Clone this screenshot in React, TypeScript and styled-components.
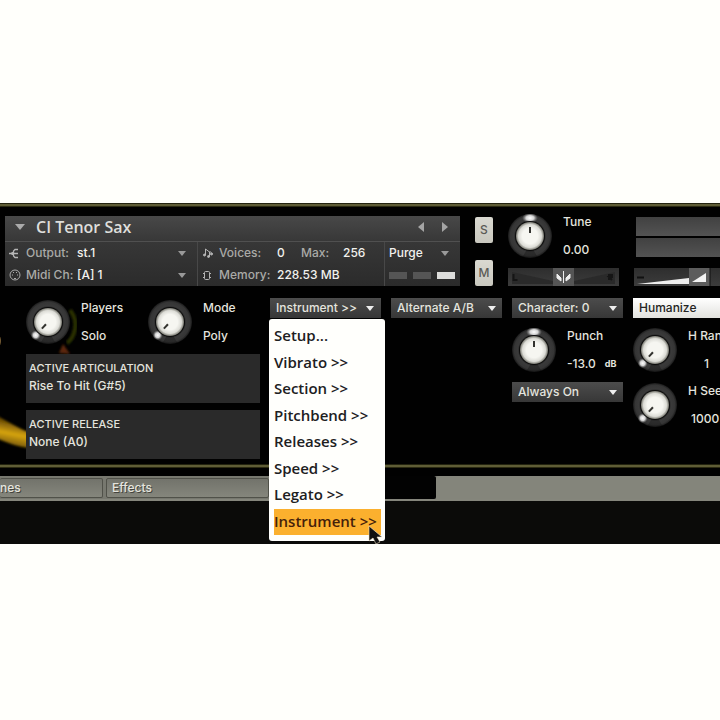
import React from "react";
import styled, { createGlobalStyle, css } from "styled-components";

const GlobalStyle = createGlobalStyle`
  *, *::before, *::after { box-sizing: border-box; }
  body {
    margin: 0;
    background: #fffffb;
    font: 500 12px/16px Inter, "Liberation Sans", sans-serif;
    color: #e4e4de;
    overflow-x: hidden;
  }
  button, input, select { font: inherit; color: inherit; }
  button { border: 0; padding: 0; cursor: default; }
`;

const Page = styled.main`
  padding-top: 203px;
  min-height: 100vh;
  overflow: hidden;
`;

const Rack = styled.section`
  background: #010101;
  overflow: hidden;
`;

const GoldLine = styled.div`
  height: 4px;
  background: #5f5d36;
  border-top: 1px solid #23230f;
  border-bottom: 1px solid #2b2a12;
`;

const TopRow = styled.div`
  display: grid;
  grid-template-columns: minmax(0, 455fr) 18px 111px minmax(0, 86fr);
  gap: 15px;
  padding: 7px 0 0 5px;
  height: 91px;
`;

/* ---------- instrument header ---------- */

const Header = styled.div`
  height: 70px;
  margin-top: 2px;
  background: linear-gradient(#484848, #373737 26px, #2b2b2b);
`;

const TitleRow = styled.div`
  display: flex;
  align-items: flex-start;
  height: 26px;
  padding: 0 9px 0 9px;
  border-bottom: 1px solid #505050;
`;

const Title = styled.h1`
  flex: 1;
  margin: 0 0 0 10px;
  font: 600 16px/22px "Open Sans", "Noto Sans", sans-serif;
  color: #dededb;
  white-space: nowrap;
`;

const IconButton = styled.button`
  display: grid;
  place-items: center;
  height: 22px;
  width: 12px;
  background: none;
  & + & { margin-left: 12px; }
`;

const HeaderGrid = styled.div`
  display: grid;
  grid-template-columns: minmax(0, 192fr) minmax(0, 187fr) minmax(0, 76fr);
`;

const HeaderColumn = styled.div`
  & + & { border-left: 1px solid #484848; }
`;

const Field = styled.div<{ $plain?: boolean }>`
  display: flex;
  align-items: center;
  height: 22px;
  padding-left: 4px;
  white-space: nowrap;
  color: #aaaaa7;
  & + & { border-top: ${(p) => (p.$plain ? "0" : "1px solid #454545")}; }
`;

const FieldIcon = styled.span`
  flex: none;
  width: 17px;
  display: flex;
`;

const FieldLabel = styled.label<{ $w: number }>`
  flex: none;
  width: ${(p) => p.$w}px;
`;

const Value = styled.output<{ $w?: number }>`
  flex: none;
  width: ${(p) => (p.$w ? `${p.$w}px` : "auto")};
  color: #f1f1ed;
`;

const FieldSelect = styled.select`
  flex: 1;
  min-width: 0;
  margin-right: 11px;
  padding: 0 14px 0 0;
  border: 0;
  appearance: none;
  color: #f1f1ed;
  background: url("data:image/svg+xml,%3Csvg xmlns='http://www.w3.org/2000/svg' width='8' height='5'%3E%3Cpath d='M0 0h8L4 5z' fill='%23999'/%3E%3C/svg%3E") right center no-repeat;
`;

const Meter = styled.i<{ $on?: boolean }>`
  flex: none;
  width: 18px;
  height: 7px;
  margin: 0 6px 0 0;
  background: ${(p) => (p.$on ? "#dddddb" : "#555")};
`;

/* ---------- solo / mute ---------- */

const ToggleStack = styled.div`
  display: flex;
  flex-direction: column;
  gap: 17px;
  padding-top: 3px;
`;

const Toggle = styled.button`
  height: 26px;
  border-radius: 2px;
  background: linear-gradient(#dad9d1, #c8c7be);
  color: #5b5a55;
`;

/* ---------- knobs and sliders ---------- */

const KnobField = styled.label`
  display: flex;
  gap: 11px;
  height: 44px;
  white-space: nowrap;
`;

const KnobFace = styled.span`
  position: relative;
  flex: none;
  width: 44px;
  height: 44px;
  svg { display: block; }
`;

const HiddenRange = styled.input`
  position: absolute;
  inset: 0;
  width: 100%;
  height: 100%;
  margin: 0;
  opacity: 0;
`;

const KnobText = styled.span`
  display: flex;
  flex-direction: column;
  justify-content: space-between;
  height: 44px;
`;

const KnobValue = styled.span<{ $indent?: number }>`
  display: flex;
  align-items: center;
  gap: 9px;
  padding-left: ${(p) => p.$indent ?? 0}px;
`;

const Unit = styled.small`
  font-size: 9px;
  font-weight: 700;
`;

function Knob({ label, value, unit, angle, indent }: {
  label: string; value: string; unit?: string; angle: number; indent?: number;
}) {
  const id = React.useId();
  return (
    <KnobField>
      <KnobFace>
        <svg width="44" height="44" viewBox="0 0 44 44" aria-hidden="true">
          <defs>
            <radialGradient id={`${id}r`}>
              <stop offset=".6" stopColor="#1a1a1a" />
              <stop offset=".74" stopColor="#3a3a3a" />
              <stop offset=".9" stopColor="#353535" />
              <stop offset="1" stopColor="#1a1a1a" />
            </radialGradient>
            <radialGradient id={`${id}c`}>
              <stop offset=".55" stopColor="#f6f6f1" />
              <stop offset=".82" stopColor="#dcdcd6" />
              <stop offset="1" stopColor="#77776f" />
            </radialGradient>
            <radialGradient id={`${id}g`}>
              <stop offset="0" stopColor="#fff" />
              <stop offset=".5" stopColor="#eee" stopOpacity=".85" />
              <stop offset="1" stopColor="#888" stopOpacity="0" />
            </radialGradient>
          </defs>
          <circle cx="22" cy="22" r="22" fill={`url(#${id}r)`} />
          <path d="M14 44l8-14 8 14z" fill="#020202" opacity=".25" />
          <g transform={`rotate(${angle} 22 22)`}>
            <ellipse cx="22" cy="4" rx={angle === 0 ? 8 : 5} ry="5" fill={`url(#${id}g)`} />
          </g>
          <circle cx="22" cy="22" r="15" fill="#0d0d0d" />
          <circle cx="22" cy="22" r="14" fill={`url(#${id}c)`} />
          <path d="M22 13v6" stroke="#33332f" strokeWidth="2" transform={`rotate(${angle} 22 22)`} />
        </svg>
        <HiddenRange type="range" defaultValue={angle === 0 ? 50 : 0} aria-label={label} />
      </KnobFace>
      <KnobText>
        <span>{label}</span>
        <KnobValue $indent={indent}>{value}{unit && <Unit>{unit}</Unit>}</KnobValue>
      </KnobText>
    </KnobField>
  );
}

const Channel = styled.div`
  display: flex;
  flex-direction: column;
  justify-content: space-between;
  height: 72px;
  min-width: 0;
`;

const Track = styled.span`
  position: relative;
  display: block;
  height: 18px;
  overflow: hidden;
  background: linear-gradient(#2e2e2e, #3c3c3c);
  svg { display: block; }
`;

const Screens = styled.div`
  display: grid;
  gap: 2px;
  padding: 3px 0 0 2px;
`;

const Screen = styled.div`
  height: 19px;
  background: linear-gradient(#414141, #535353);
`;

/* ---------- performance controls ---------- */

const Controls = styled.div`
  position: relative;
  display: grid;
  grid-template-columns: 234fr 111fr 111fr 111fr 87fr;
  gap: 10px;
  height: 166px;
  padding-left: 26px;
`;

const Backdrop = styled.svg`
  position: absolute;
  left: 0;
  top: 0;
`;

const Column = styled.div`
  position: relative;
  min-width: 0;
  display: flex;
  flex-direction: column;
  gap: 10px;
`;

const KnobRow = styled.div`
  display: grid;
  grid-template-columns: 122px 1fr;
  padding-top: 2px;
`;

const InfoStack = styled.div`
  display: grid;
  gap: 7px;
`;

const Info = styled.div`
  height: 49px;
  padding: 5px 3px;
  line-height: 18px;
  background: #2a2a2a;
  p { margin: 0; }
  p:first-child { font-size: 11px; }
`;

const bar = css`
  display: flex;
  align-items: center;
  width: 100%;
  height: 20px;
  padding: 0 7px 0 6px;
  border: 0;
  border-radius: 0;
  text-align: left;
  white-space: nowrap;
`;

const MenuButton = styled.button`
  ${bar}
  justify-content: space-between;
  background: linear-gradient(#4c4c4c, #373737);
`;

const BarSelect = styled.select`
  ${bar}
  flex: none;
  appearance: none;
  background:
    url("data:image/svg+xml,%3Csvg xmlns='http://www.w3.org/2000/svg' width='8' height='5'%3E%3Cpath d='M0 0h8L4 5z' fill='%23eee'/%3E%3C/svg%3E") right 6px center no-repeat,
    linear-gradient(#4c4c4c, #373737);
`;

const ModeButton = styled.button`
  ${bar}
  flex: none;
  color: #242422;
  background: linear-gradient(#fff, #e2e2de);
`;

const Menu = styled.ul`
  position: absolute;
  z-index: 2;
  top: 21px;
  left: -1px;
  display: grid;
  grid-auto-rows: 1fr;
  width: 116px;
  height: 222px;
  margin: 0;
  padding: 4px 4px 6px 5px;
  list-style: none;
  border-radius: 3px;
  background: #fffffc;
`;

const MenuItem = styled.button<{ $active?: boolean }>`
  width: 100%;
  height: 100%;
  padding-bottom: 2px;
  text-align: left;
  white-space: nowrap;
  font: 600 15px/24px "Open Sans", "Noto Sans", sans-serif;
  color: ${(p) => (p.$active ? "#45210a" : "#20201e")};
  background: ${(p) => (p.$active ? "#fbb02e" : "none")};
`;

const Pointer = styled.svg`
  position: absolute;
  z-index: 3;
  top: 228px;
  left: 98px;
`;

const Stack = styled.div`
  display: grid;
  gap: 11px;
`;

/* ---------- tab strip ---------- */

const Tabs = styled.nav`
  display: grid;
  grid-template-columns: 103fr 166fr 167fr 284fr;
  height: 25px;
  margin-top: 8px;
  border-bottom: 2px solid #85867c;
  background: #77786f;
`;

const Tab = styled.button<{ $current?: boolean }>`
  margin: ${(p) => (p.$current ? "0" : "2px 0 1px 3px")};
  padding: 0 5px;
  text-align: left;
  text-shadow: 1px 1px #44443e;
  border-radius: 2px;
  border: ${(p) => (p.$current ? "0" : "1px solid #505149")};
  background: ${(p) => (p.$current ? "#020202" : "linear-gradient(#72736b, #85867c)")};
  &:first-child { margin-left: 0; padding-left: 0; border-left: 0; }
`;

const TabFill = styled.div`
  border-top-left-radius: 3px;
  background: #84857b;
`;

const Floor = styled.div`
  height: 43px;
  background: #0b0b09;
`;

const menuItems = ["Setup...", "Vibrato >>", "Section >>", "Pitchbend >>", "Releases >>", "Speed >>", "Legato >>", "Instrument >>"];

const Down = () => (
  <svg width="8" height="5" aria-hidden="true"><path d="M0 0h8L4 5z" fill="#eee" /></svg>
);

export default function App() {
  return (
    <Page>
      <GlobalStyle />
      <Rack>
        <GoldLine />
        <TopRow>
          <Header>
            <TitleRow>
              <IconButton aria-label="Collapse">
                <svg width="10" height="6"><path d="M0 0h10L5 6z" fill="#aaa" /></svg>
              </IconButton>
              <Title>CI Tenor Sax</Title>
              <IconButton aria-label="Previous instrument">
                <svg width="6" height="10"><path d="M6 0v10L0 5z" fill="#a4a4a4" /></svg>
              </IconButton>
              <IconButton aria-label="Next instrument">
                <svg width="6" height="10"><path d="M0 0v10l6-5z" fill="#a4a4a4" /></svg>
              </IconButton>
            </TitleRow>
            <HeaderGrid>
              <HeaderColumn>
                <Field>
                  <FieldIcon>
                    <svg width="11" height="11" fill="none" stroke="#b5b5b5"><path d="M0 5.5h9M9 1.5H6L4.5 3v5L6 9.5h3" strokeWidth="1.3" /><path d="M3.5 4v3" strokeWidth="2" /></svg>
                  </FieldIcon>
                  <FieldLabel $w={51} htmlFor="output">Output:</FieldLabel>
                  <FieldSelect id="output"><option>st.1</option></FieldSelect>
                </Field>
                <Field>
                  <FieldIcon>
                    <svg width="12" height="12" fill="none" stroke="#aaa"><circle cx="6" cy="6" r="5" /><path d="M3 6h1M8 6h1M4 3.5h1M7 3.5h1M5 9.5h2" /></svg>
                  </FieldIcon>
                  <FieldLabel $w={51} htmlFor="midi">Midi Ch:</FieldLabel>
                  <FieldSelect id="midi"><option>[A] 1</option></FieldSelect>
                </Field>
              </HeaderColumn>
              <HeaderColumn>
                <Field>
                  <FieldIcon>
                    <svg width="12" height="11" fill="#b5b5b5" stroke="#b5b5b5"><path d="M3.5 7V1l4 3v5M7.5 3l3 3" fill="none" /><circle cx="2.5" cy="7" r="1" /><circle cx="6.5" cy="8.5" r="1" /><circle cx="9.5" cy="6" r="1" /></svg>
                  </FieldIcon>
                  <FieldLabel as="span" $w={58}>Voices:</FieldLabel>
                  <Value $w={24}>0</Value>
                  <FieldLabel as="span" $w={42}>Max:</FieldLabel>
                  <Value>256</Value>
                </Field>
                <Field>
                  <FieldIcon>
                    <svg width="10" height="11" fill="none" stroke="#b5b5b5"><rect x="2.5" y="1.5" width="5" height="8" rx="1" /><path d="M1 3.5h1M1 7.5h1M8 3.5h1M8 7.5h1" /></svg>
                  </FieldIcon>
                  <FieldLabel as="span" $w={58}>Memory:</FieldLabel>
                  <Value>228.53 MB</Value>
                </Field>
              </HeaderColumn>
              <HeaderColumn>
                <Field>
                  <FieldSelect aria-label="Purge"><option>Purge</option></FieldSelect>
                </Field>
                <Field $plain>
                  <Meter /><Meter /><Meter $on />
                </Field>
              </HeaderColumn>
            </HeaderGrid>
          </Header>

          <ToggleStack>
            <Toggle aria-label="Solo">S</Toggle>
            <Toggle aria-label="Mute">M</Toggle>
          </ToggleStack>

          <Channel>
            <Knob label="Tune" value="0.00" angle={0} />
            <Track>
              <svg width="111" height="18">
                <path d="M4 4l41 9v3H4zM107 4l-41 9v3h41z" fill="#2a2a2a" />
                <path d="M5.5 6v6h4M101 12V7h3v2h-3l3 3" fill="none" stroke="#151515" strokeWidth="2" />
                <rect x="45" width="21" height="18" fill="#555" />
                <path d="M55.5 3v12" stroke="#eee" />
                <path d="M49 6v4l4 3v-3zM62 6v4l-4 3v-3z" fill="#eee" stroke="#eee" />
              </svg>
              <HiddenRange type="range" aria-label="Pan" />
            </Track>
          </Channel>

          <Channel>
            <Screens><Screen /><Screen /></Screens>
            <Track>
              <svg width="86" height="18">
                <path d="M3 9.5h7" stroke="#111" strokeWidth="2" />
                <path d="M3 16l52-6v6z" fill="#eee" />
                <rect x="55" width="21" height="18" fill="#5c5c5c" />
                <path d="M58 14l14-9v9z" fill="#f2f2f2" />
                <path d="M76 0v18" stroke="#111" />
              </svg>
              <HiddenRange type="range" aria-label="Volume" />
            </Track>
          </Channel>
        </TopRow>

        <Controls>
          <Backdrop width="120" height="166" aria-hidden="true">
            <defs>
              <linearGradient id="arc" x1="0.2" y1="0" x2="0" y2="1">
                <stop offset="0" stopColor="#3a2402" />
                <stop offset=".5" stopColor="#d6a40c" />
                <stop offset="1" stopColor="#4a3503" />
              </linearGradient>
              <filter id="soft"><feGaussianBlur stdDeviation="1" /></filter>
            </defs>
            <path d="M-4 117C6 123 18 130 30 135v15C18 149 6 144-4 140z" fill="url(#arc)" filter="url(#soft)" />
            <path d="M70 12q7 9 5 19t-8 14" fill="none" stroke="#2c3004" strokeWidth="4" filter="url(#soft)" />
            <path d="M59 55l4-9 7 10z" fill="#5c280a" filter="url(#soft)" />
            <path d="M-1 40q2 2 0 6" fill="none" stroke="#9a7742" strokeWidth="3" filter="url(#soft)" />
          </Backdrop>
          <Column>
            <KnobRow>
              <Knob label="Players" value="Solo" angle={-137} />
              <Knob label="Mode" value="Poly" angle={-137} />
            </KnobRow>
            <InfoStack>
              <Info><p>ACTIVE ARTICULATION</p><p>Rise To Hit (G#5)</p></Info>
              <Info><p>ACTIVE RELEASE</p><p>None (A0)</p></Info>
            </InfoStack>
          </Column>
          <Column>
            <MenuButton aria-haspopup="menu" aria-expanded="true">Instrument &gt;&gt;<Down /></MenuButton>
            <Menu role="menu">
              {menuItems.map((item, i) => (
                <li key={item} role="none">
                  <MenuItem role="menuitem" $active={i === 7}>{item}</MenuItem>
                </li>
              ))}
            </Menu>
            <Pointer width="15" height="20" viewBox="0 0 15 20" aria-hidden="true">
              <path d="M1 0v15l4-3 3 6 4-2-3-5h5z" fill="#111" stroke="#f5e6c8" strokeWidth=".6" />
            </Pointer>
          </Column>
          <Column>
            <BarSelect aria-label="Alternate mode"><option>Alternate A/B</option></BarSelect>
          </Column>
          <Column>
            <BarSelect aria-label="Character"><option>Character: 0</option></BarSelect>
            <Knob label="Punch" value="-13.0" unit="dB" angle={0} />
            <BarSelect aria-label="Punch mode"><option>Always On</option></BarSelect>
          </Column>
          <Column>
            <ModeButton>Humanize</ModeButton>
            <Stack>
              <Knob label="H Ran" value="1" angle={-137} indent={16} />
              <Knob label="H See" value="1000" angle={-137} indent={3} />
            </Stack>
          </Column>
        </Controls>
        <GoldLine />
        <Tabs aria-label="Editor pages">
          <Tab>nes</Tab>
          <Tab>Effects</Tab>
          <Tab $current aria-label="Current page" />
          <TabFill />
        </Tabs>
        <Floor />
      </Rack>
    </Page>
  );
}
